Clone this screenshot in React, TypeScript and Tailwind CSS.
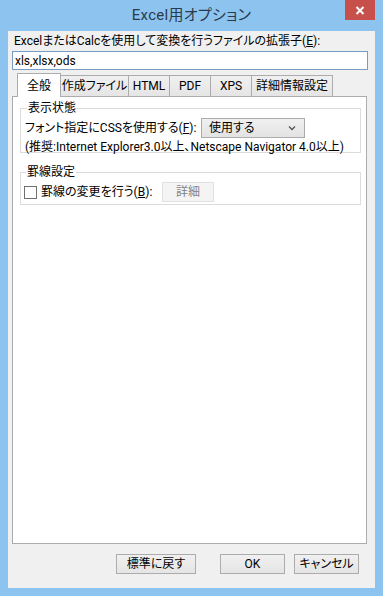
import React from "react";

const font = {
  fontFamily: 'Roboto, "Noto Sans CJK JP", "Noto Sans", sans-serif',
};

const tabs = [
  { label: "全般", w: "w-[44px]" },
  { label: "作成ファイル", w: "w-[69px]" },
  { label: "HTML", w: "w-[42px]" },
  { label: "PDF", w: "w-[42px]" },
  { label: "XPS", w: "w-[42px]" },
  { label: "詳細情報設定", w: "w-[82px]" },
];

function Tabs() {
  return (
    <div className="flex items-end h-[23px] ml-[5px]">
      {tabs.map((t, i) =>
        i === 0 ? (
          <div
            key={t.label}
            className={`${t.w} h-[24px] -mb-px relative z-10 bg-white border border-b-0 border-[#acacac] flex items-center justify-center text-[12px] pt-[1px]`}
          >
            {t.label}
          </div>
        ) : (
          <div
            key={t.label}
            className={`${t.w} h-[21px] -ml-px bg-gradient-to-b from-[#f0f0f0] to-[#e5e5e5] border border-b-0 border-[#acacac] flex items-center justify-center text-[12px]`}
          >
            {t.label}
          </div>
        )
      )}
    </div>
  );
}

function Btn({ children, w }: { children: React.ReactNode; w: string }) {
  return (
    <div
      className={`${w} h-[20px] border border-[#acacac] bg-gradient-to-b from-[#f0f0f0] to-[#e5e5e5] flex items-center justify-center text-[12px]`}
    >
      {children}
    </div>
  );
}

export default function App() {
  return (
    <div
      className="w-[383px] h-[596px] bg-[#8cc4ef] flex flex-col text-black [font-feature-settings:'palt']"
      style={font}
    >
      {/* title bar */}
      <div className="h-[31px] relative flex items-center justify-center">
        <span className="text-[15px] text-[#2b3a4a] tracking-[0.3px]">Excel用オプション</span>
        <div className="absolute right-[8px] top-0 w-[30px] h-[20px] bg-[#c7504b] flex items-center justify-center">
          <svg width="10" height="9" viewBox="0 0 10 9">
            <path d="M1.5 1 L8.5 8 M8.5 1 L1.5 8" stroke="white" strokeWidth="2" />
          </svg>
        </div>
      </div>

      <div className="mx-[8px] h-[557px] bg-[#f0f0f0] flex flex-col">
        <div className="mt-[1px] ml-[6px] h-[17px] flex items-center text-[12px]">
          ExcelまたはCalcを使用して変換を行うファイルの拡張子(<span className="underline">E</span>):
        </div>
        <div className="mt-[2px] ml-[4px] mr-[7px] h-[19px] bg-white border border-[#7a9cc0] flex items-center pl-[2px] text-[12px]">
          xls,xlsx,ods
        </div>

        <div className="mt-[3px] ml-[4px] w-[355px]">
          <Tabs />
          <div className="h-[448px] bg-white border border-[#acacac] flex flex-col pl-[7px] pr-[5px] pt-[3px]">
            <fieldset className="border border-[#dcdcdc] h-[53px] px-[4px]">
              <legend className="text-[12px] ml-[2px] px-[1px] leading-[16px]">表示状態</legend>
              <div className="flex items-center h-[21px] mt-[1px]">
                <span className="text-[12px] w-[176px]">
                  フォント指定にCSSを使用する(<span className="underline">F</span>):
                </span>
                <div className="w-[104px] h-[20px] border border-[#acacac] bg-gradient-to-b from-[#f0f0f0] to-[#e3e3e3] flex items-center justify-between pl-[7px] pr-[8px] text-[12px]">
                  <span>使用する</span>
                  <svg width="8" height="6" viewBox="0 0 8 6">
                    <path d="M1 1.5 L4 4.5 L7 1.5" stroke="#555" strokeWidth="1.3" fill="none" />
                  </svg>
                </div>
              </div>
              <div className="text-[12px] h-[18px] flex items-center">
                (推奨:Internet Explorer3.0以上、Netscape Navigator 4.0以上)
              </div>
            </fieldset>

            <fieldset className="border border-[#dcdcdc] h-[41px] px-[3px] mt-[11px]">
              <legend className="text-[12px] ml-[2px] px-[1px] leading-[16px]">罫線設定</legend>
              <div className="flex items-center h-[22px] mt-[1px]">
                <div className="w-[13px] h-[13px] border border-[#707070] bg-white" />
                <span className="text-[12px] ml-[4px] w-[121px]">
                  罫線の変更を行う(<span className="underline">B</span>):
                </span>
                <div className="w-[52px] h-[20px] border border-[#e0e0e0] bg-[#f4f4f4] flex items-center justify-center text-[12px] text-[#838383]">
                  詳細
                </div>
              </div>
            </fieldset>
          </div>
        </div>

        <div className="mt-[10px] flex">
          <div className="ml-[108px]">
            <Btn w="w-[80px]">標準に戻す</Btn>
          </div>
          <div className="ml-[24px]">
            <Btn w="w-[65px]">OK</Btn>
          </div>
          <div className="ml-[9px]">
            <Btn w="w-[65px]">キャンセル</Btn>
          </div>
        </div>
      </div>
    </div>
  );
}
